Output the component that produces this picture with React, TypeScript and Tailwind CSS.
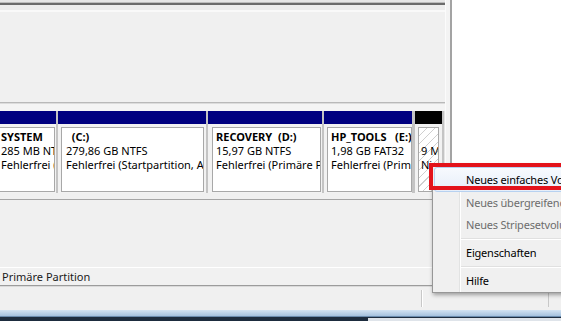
import React from "react";

type Part = {
  label: string;
  size: string;
  status: string;
  col: string;
  box: string;
  text: string;
  bar: string;
  hatched?: boolean;
};

const parts: Part[] = [
  { label: "SYSTEM", size: "285 MB NTFS", status: "Fehlerfrei (System, Aktiv)", col: "w-[62px] -ml-[6px]", box: "ml-[3px] mr-[1px]", text: "pl-[3px]", bar: "bg-[#000080]" },
  { label: "  (C:)", size: "279,86 GB NTFS", status: "Fehlerfrei (Startpartition, Auslagerungsdatei)", col: "w-[148px]", box: "ml-[3px] mr-[2px]", text: "pl-[4px]", bar: "bg-[#000080]" },
  { label: "RECOVERY  (D:)", size: "15,97 GB NTFS", status: "Fehlerfrei (Primäre Partition)", col: "w-[114px]", box: "ml-[4px] mr-[1px]", text: "pl-[3px]", bar: "bg-[#000080]" },
  { label: "HP_TOOLS   (E:)", size: "1,98 GB FAT32", status: "Fehlerfrei (Primäre Partition)", col: "w-[88px]", box: "ml-[3px]", text: "pl-[3px]", bar: "bg-[#000080]" },
  { label: "", size: "9 MB", status: "Nicht zugeordnet", col: "w-[27px] ml-[1px]", box: "ml-[3px] mr-[3px]", text: "pl-[2px]", bar: "bg-black", hatched: true },
];

function Partition({ p }: { p: Part }) {
  return (
    <div className={`${p.col} flex flex-col bg-[#f2f2f2]`}>
      <div className={`h-[13px] ${p.bar}`} />
      <div className="flex-1 pt-[3px] pb-[1px] flex">
        <div
          className={`flex-1 min-w-0 border border-[#a8a8a8] overflow-hidden ${p.box} ${
            p.hatched
              ? "bg-[repeating-linear-gradient(135deg,#ffffff_0px,#ffffff_5px,#cfcfcf_5px,#cfcfcf_6px)]"
              : "bg-white"
          }`}
        >
          <div className={`pt-[2px] ${p.text} text-[11px] leading-[14px] text-black whitespace-pre overflow-hidden`}>
            <div className="font-bold h-[14px]">{p.label}</div>
            <div>{p.size}</div>
            <div>{p.status}</div>
          </div>
        </div>
      </div>
    </div>
  );
}

function MenuItem({ label, disabled, active }: { label: string; disabled?: boolean; active?: boolean }) {
  if (active) {
    return (
      <div className="h-[25px] px-[1px]">
        <div className="h-full rounded-[3px] border border-[#b7d1f0] bg-[linear-gradient(#f7fafe,#e6eef9)] pl-[31px] pt-[1px] leading-[22px] text-black whitespace-nowrap">
          {label}
        </div>
      </div>
    );
  }
  return (
    <div className={`h-[22px] pl-[33px] leading-[22px] whitespace-nowrap ${disabled ? "text-[#6d6d6d]" : "text-black"}`}>
      {label}
    </div>
  );
}

function Separator() {
  return (
    <div className="h-[6px] pl-[28px] flex flex-col justify-center">
      <div className="h-[1px] bg-[#e0e0e0]" />
      <div className="h-[1px] bg-white" />
    </div>
  );
}

export default function App() {
  return (
    <div className="relative w-[561px] h-[321px] overflow-hidden bg-[#f0f0f0] font-['Noto_Sans','Segoe_UI',sans-serif] text-[11px]">
      <div className="flex h-[286px]">
        <div className="w-[445px] flex flex-col">
          <div className="h-[2px] bg-[#e6e6e6]" />
          <div className="h-[1px] bg-[#bdbdbd]" />
          <div className="h-[2px] bg-[#6b6b6b]" />
          <div className="h-[5px] bg-[#ededed]" />
          <div className="h-[2px] bg-[#f9f9f9]" />
          <div className="h-[90px] bg-[#f0f0f0]" />
          <div className="h-[1px] bg-[#b9b9b9]" />
          <div className="h-[1px] bg-[#dcdcdc]" />
          <div className="h-[7px] bg-[#f4f4f4]" />
          <div className="h-[82px] flex gap-[2px] bg-[#c4c4c4]">
            {parts.map((p, i) => (
              <Partition key={i} p={p} />
            ))}
            <div className="flex-1 bg-[#e4e4e4]" />
          </div>
          <div className="h-[6px] bg-[#f0f0f0]" />
          <div className="h-[1px] bg-[#a5a5a5]" />
          <div className="h-[67px] bg-[#f0f0f0]" />
          <div className="h-[1px] bg-white" />
          <div className="h-[17px] bg-[#f1f1f1] pl-[2px] leading-[17px] text-[#1a1a1a] whitespace-nowrap">Primäre Partition</div>
          <div className="h-[1px] bg-[#9c9c9c]" />
        </div>
        <div className="w-[1px] bg-[#fbfbfb]" />
        <div className="w-[4px] bg-[#f3f3f3]" />
        <div className="w-[2px] bg-[#a3a3a3]" />
        <div className="flex-1 bg-white" />
      </div>

      <div className="h-[24px] flex bg-[#f0f0f0] border-t border-[#dadada]">
        <div className="w-[421px]" />
        <div className="w-[1px] my-[3px] bg-[#c8c8c8]" />
        <div className="w-[1px] my-[3px] bg-white" />
        <div className="w-[125px]" />
        <div className="w-[1px] my-[3px] bg-[#c8c8c8]" />
        <div className="flex-1" />
      </div>

      <div className="h-[11px] flex flex-col">
        <div className="h-[6px] bg-[linear-gradient(#d3e3f2,#a5c1dd)]" />
        <div className="h-[1px] bg-[#6a8bad]" />
        <div className="flex-1 flex bg-[#1d2c3e]">
          <div className="w-[368px]" />
          <div className="flex-1 mt-[1px] bg-[#dfe4ea]" />
        </div>
      </div>

      <div className="absolute left-[432px] top-[164px] w-[150px] h-[129px] bg-[#f0f0f0] border border-[#979797] shadow-[1px_2px_4px_rgba(0,0,0,0.35)] tracking-[-0.2px]">
        <div className="absolute left-[26px] top-0 bottom-0 w-[1px] bg-[#e2e3e3]" />
        <div className="absolute left-[27px] top-0 bottom-0 w-[1px] bg-white" />
        <div className="relative pt-[2px]">
          <MenuItem label="Neues einfaches Volume..." active />
          <MenuItem label="Neues übergreifendes Volume..." disabled />
          <MenuItem label="Neues Stripesetvolume..." disabled />
          <Separator />
          <MenuItem label="Eigenschaften" />
          <Separator />
          <MenuItem label="Hilfe" />
        </div>
      </div>

      <div className="absolute left-[429px] top-[163px] w-[150px] h-[27px] border-[4px] border-[#e3131b]" />
    </div>
  );
}
